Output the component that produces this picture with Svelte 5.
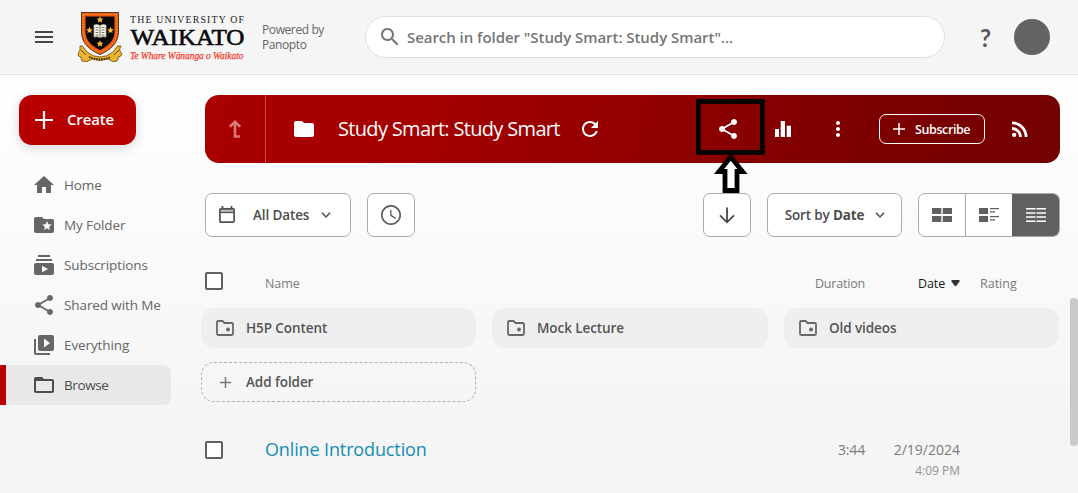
<script>
  const icons = {
    home: 'M10 20v-6h4v6h5v-8h3L12 3 2 12h3v8z',
    star: 'M20 6h-8l-2-2H4c-1.1 0-2 .9-2 2v12c0 1.1.9 2 2 2h16c1.1 0 2-.9 2-2V8c0-1.1-.9-2-2-2zm-2.06 11L15 15.28 12.06 17l.78-3.33-2.59-2.24 3.41-.29L15 8l1.34 3.14 3.41.29-2.59 2.24.78 3.33z',
    subs: 'M20 8H4V6h16v2zm-2-6H6v2h12V2zm4 10v8c0 1.1-.9 2-2 2H4c-1.1 0-2-.9-2-2v-8c0-1.1.9-2 2-2h16c1.1 0 2 .9 2 2zm-6 4l-6-3.27v6.53L16 16z',
    share: 'M18 16.08c-.76 0-1.44.3-1.96.77L8.91 12.7c.05-.23.09-.46.09-.7s-.04-.47-.09-.7l7.05-4.11c.54.5 1.25.81 2.04.81 1.66 0 3-1.34 3-3s-1.34-3-3-3-3 1.34-3 3c0 .24.04.47.09.7L8.04 9.81C7.5 9.31 6.79 9 6 9c-1.66 0-3 1.34-3 3s1.34 3 3 3c.79 0 1.5-.31 2.04-.81l7.12 4.16c-.05.21-.08.43-.08.65 0 1.61 1.31 2.92 2.92 2.92s2.92-1.31 2.92-2.92-1.31-2.92-2.92-2.92z',
    library: 'M4 6H2v14c0 1.1.9 2 2 2h14v-2H4V6zm16-4H8c-1.1 0-2 .9-2 2v12c0 1.1.9 2 2 2h12c1.1 0 2-.9 2-2V4c0-1.1-.9-2-2-2zm-8 12.5v-9l6 4.5-6 4.5z',
    open: 'M20 6h-8l-2-2H4c-1.1 0-1.99.9-1.99 2L2 18c0 1.1.9 2 2 2h16c1.1 0 2-.9 2-2V8c0-1.1-.9-2-2-2zm0 12H4V8h16v10z',
    folder: 'M10 4H4c-1.1 0-1.99.9-1.99 2L2 18c0 1.1.9 2 2 2h16c1.1 0 2-.9 2-2V8c0-1.1-.9-2-2-2h-8l-2-2z',
    refresh: 'M17.65 6.35C16.2 4.9 14.21 4 12 4c-4.42 0-7.99 3.58-7.99 8s3.57 8 7.99 8c3.73 0 6.84-2.55 7.73-6h-2.08c-.82 2.33-3.04 4-5.65 4-3.31 0-6-2.69-6-6s2.69-6 6-6c1.66 0 3.14.69 4.22 1.78L13 11h7V4l-2.35 2.35z',
    chart: 'M4 12h4v8H4zM9.7 4H14v16H9.7zM15.7 8.7H20V20h-4.3z',
    more: 'M12 8c1.1 0 2-.9 2-2s-.9-2-2-2-2 .9-2 2 .9 2 2 2zm0 2c-1.1 0-2 .9-2 2s.9 2 2 2 2-.9 2-2-.9-2-2-2zm0 6c-1.1 0-2 .9-2 2s.9 2 2 2 2-.9 2-2-.9-2-2-2z',
    rss: 'M4 17.82a2.18 2.18 0 1 0 4.36 0a2.18 2.18 0 1 0-4.36 0zM4 4.44v2.83c7.03 0 12.73 5.7 12.73 12.73h2.83c0-8.59-6.97-15.56-15.56-15.56zm0 5.66v2.83c3.9 0 7.07 3.17 7.07 7.07h2.83c0-5.47-4.43-9.9-9.9-9.9z',
    clock: 'M11.99 2C6.47 2 2 6.48 2 12s4.47 10 9.99 10C17.52 22 22 17.52 22 12S17.52 2 11.99 2zM12 20.3c-4.6 0-8.3-3.7-8.3-8.3S7.4 3.7 12 3.7s8.3 3.7 8.3 8.3-3.7 8.3-8.3 8.3zM12.5 7H11.2v5.8l5.1 3.1.7-1.2-4.5-2.7z',
    search: 'M15.5 14h-.79l-.28-.27C15.41 12.59 16 11.11 16 9.5 16 5.91 13.09 3 9.5 3S3 5.91 3 9.5 5.91 16 9.5 16c1.61 0 3.09-.59 4.23-1.57l.27.28v.79l5 4.99L20.49 19l-4.99-5zm-6 0C7.01 14 5 11.99 5 9.5S7.01 5 9.5 5 14 7.01 14 9.5 11.99 14 9.5 14z'
  };

  const nav = [
    { label: 'Home', icon: 'home' },
    { label: 'My Folder', icon: 'star' },
    { label: 'Subscriptions', icon: 'subs' },
    { label: 'Shared with Me', icon: 'share' },
    { label: 'Everything', icon: 'library' },
    { label: 'Browse', icon: 'open', active: true }
  ];
  const folders = ['H5P Content', 'Mock Lecture', 'Old videos'];
</script>

{#snippet icon(name, size = 24)}
  <svg class="icon" width={size} height={size} viewBox="0 0 24 24" fill="currentColor"><path d={icons[name]} /></svg>
{/snippet}

{#snippet chevron()}
  <svg class="icon" width="10" height="8" viewBox="0 0 10 8" fill="none" stroke="currentColor" stroke-width="1.5"><path d="M1 1.7 5 5.9 9 1.7" /></svg>
{/snippet}

<div class="page">
  <header>
    <svg class="menu" width="18" height="12" viewBox="0 0 18 12" fill="#454545"><path d="M0 0h18v2H0zM0 5h18v2H0zM0 10h18v2H0z" /></svg>
    <svg class="logo" width="176" height="60" viewBox="76 7 176 60">
      <path d="M80 46q3 -1 4 2l3 4q13 10 26 0l3-4q1-3 5-2q-3 4 1 8q-1 3-4 3q1 2-1 4q-4 2-9-2q-8 3-16 0q-5 4-10 2q-1-2-1-4q-3 0-3-3q3-4 2-8z" fill="#eeb52c" stroke="#65470c" stroke-width=".8" />
      <path d="M81.5 12.5h37v19c0 11-7 18-18.5 23c-11.500-5-18.500-12-18.500-23z" fill="#f05a16" stroke="#57371b" />
      <path d="M83.3 14.3h33.400v17.200c0 9.600-6 16.300-16.700 21c-10.700-4.700-16.700-11.400-16.700-21z" fill="none" stroke="#f8a51d" stroke-dasharray="1.5 1.5" />
      <path d="M85.5 16.5h29v15c0 8-5 14-14.500 18.500c-9.500-4.500-14.500-10.500-14.500-18.500z" fill="#090909" />
      <g fill="#f8b63c">
        <path id="star" d="M100 16.2l1 2.300 2.400.2-1.800 1.600.6 2.300-2.200-1.200-2.200 1.200.6-2.300-1.800-1.600 2.400-.2z" />
        <use href="#star" x="-10.500" y="10.500" /><use href="#star" x="10.500" y="10.500" /><use href="#star" y="24" />
      </g>
      <path d="M94 25q3-1 6 .5q3-1.500 6-.5v12q-3-1-6 .5q-3-1.500-6-.5z" fill="#f7f5e7" stroke="#bbb5a0" stroke-width=".7" />
      <path d="M100 25.500v12M95.500 27.500h3M95.500 30h3M95.500 32.500h3M95.500 35h3M101.500 27.500h3M101.500 30h3M101.500 32.500h3M101.500 35h3" fill="none" stroke="#555" stroke-width=".8" />
      <path d="M89 57q11 4.500 22 0" fill="none" stroke="#3d2c0b" stroke-width="2" stroke-dasharray="1.5 1" />
      <path d="M81 50l5 5M119 50l-5 5" stroke="#624611" fill="none" />
      <text x="130" y="22.700" class="serif" font-size="9.800" textLength="114" fill="#222">THE UNIVERSITY OF</text>
      <text x="130.500" y="45" class="serif" font-size="24" textLength="114" lengthAdjust="spacingAndGlyphs" fill="#080808" stroke="#080808" stroke-width=".6">WAIKATO</text>
      <text x="130" y="58.500" class="serif" font-size="10.500" font-style="italic" textLength="113.500" lengthAdjust="spacingAndGlyphs" fill="#f03c2c" stroke="#f03c2c" stroke-width=".25">Te Whare Wānanga o Waikato</text>
    </svg>
    <div class="powered">Powered by<br />Panopto</div>
    <div class="search">{@render icon('search')}<span>Search in folder "Study Smart: Study Smart"...</span></div>
    <span class="help">?</span>
    <span class="avatar"></span>
  </header>

  <div class="body">
    <aside>
      <button class="create">
        <svg width="18" height="18" viewBox="0 0 18 18" stroke="#fff" stroke-width="2.2"><path d="M0 9h18M9 0v18" /></svg>
        <span>Create</span>
      </button>
      <nav>
        {#each nav as item}
          <div class="nav-item" class:active={item.active}>{@render icon(item.icon)}<span>{item.label}</span></div>
        {/each}
      </nav>
    </aside>

    <main>
      <section class="banner">
        <div class="up"><svg width="14" height="18" viewBox="0 0 14 18" fill="none" stroke="#d87979" stroke-width="2.6"><path d="M7 1.800v14.700H12M1.800 6.800 7 1.800 12.200 6.800" /></svg></div>
        <span class="b-folder">{@render icon('folder')}</span>
        <h1>Study Smart: Study Smart</h1>
        <span class="b-refresh">{@render icon('refresh')}</span>
        <div class="actions">
          <span class="share">
            {@render icon('share')}
            <svg class="marker" width="70" height="96" viewBox="0 0 70 96" fill="none" stroke="#000">
              <rect x="2.400" y="2.400" width="64" height="51" stroke-width="4.8" />
              <path d="M34.700 58 23 72.500h6v19h12v-19h5.500z" fill="#fff" stroke-width="4.8" />
            </svg>
          </span>
          <span class="stat">{@render icon('chart')}</span>
          <span class="more">{@render icon('more')}</span>
          <button class="subscribe">
            <svg width="12" height="12" viewBox="0 0 12 12" stroke="#fff" stroke-width="1.5"><path d="M0 6h12M6 0v12" /></svg>
            <span>Subscribe</span>
          </button>
          <span class="rss">{@render icon('rss')}</span>
        </div>
      </section>

      <section class="toolbar">
        <button class="box dates">
          <svg width="16" height="18" viewBox="0 0 16 18" fill="none" stroke="#505050"><path d="M1 7V3.500q0-1 1-1h12q1 0 1 1V7z" fill="#bcbcbc" stroke="none" /><rect x=".9" y="2.900" width="14.200" height="13.200" rx="1" stroke-width="1.7" /><path d="M1 6.500h14" stroke-width="1.3" /><path d="M3.500 0v3M12.500 0v3" stroke-width="1.8" /></svg>
          <span>All Dates</span>{@render chevron()}
        </button>
        <button class="box square clock">{@render icon('clock')}</button>
        <button class="box square down"><svg width="16" height="17" viewBox="0 0 16 17" fill="none" stroke="#484848" stroke-width="1.8"><path d="M8 0.500v14.500M1 8.300l7 7 7-7" /></svg></button>
        <button class="box sort"><span>Sort by <b>Date</b></span>{@render chevron()}</button>
        <div class="box views">
          <span><svg width="20" height="14" viewBox="0 0 20 14" fill="#606060"><path d="M0 0h9.300v6H0zM10.700 0H20v6h-9.300zM0 8h9.300v6H0zM10.700 8H20v6h-9.300z" /></svg></span>
          <span><svg width="20" height="14" viewBox="0 0 20 14" fill="#606060"><path d="M0 0h9v6H0zM0 8h9v6H0zM11 0h9v1.300h-9zM11 3.200h5v1.300h-5zM11 8h9v1.300h-9zM11 11.200h5v1.300h-5z" /></svg></span>
          <span class="on"><svg width="20" height="14" viewBox="0 0 20 14" fill="#fff"><path d="M0 0h9.500v1.500H0zM10.500 0H20v1.500h-9.500zM0 4.200h9.500v1.500H0zM10.500 4.200H20v1.500h-9.500zM0 8.300h9.500v1.500H0zM10.500 8.300H20v1.500h-9.500zM0 12.500h9.500V14H0zM10.500 12.500H20V14h-9.500z" /></svg></span>
        </div>
      </section>

      <section class="columns">
        <i class="check"></i>
        <span class="c-name">Name</span>
        <span class="c-duration">Duration</span>
        <span class="c-date">Date <svg width="9" height="6" viewBox="0 0 9 6" fill="#333"><path d="M.5 0h8v1.500L5.200 6H3.800L.5 1.500z" /></svg></span>
        <span class="c-rating">Rating</span>
      </section>

      <section class="folders">
        {#each folders as f}
          <div class="card">
            <svg width="18" height="16" viewBox="0 0 18 16" fill="none" stroke="#686868" stroke-width="1.8"><path d="M1 2.200Q1 1 2.200 1H6.500L8.500 3H15.800Q17 3 17 4.200V13.800Q17 15 15.800 15H2.200Q1 15 1 13.800z" /><circle cx="12" cy="9.500" r="1.900" fill="#686868" stroke="none" /></svg>
            <span>{f}</span>
          </div>
        {/each}
        <div class="card add">
          <svg width="11" height="11" viewBox="0 0 11 11" stroke="#777" stroke-width="1.5"><path d="M0 5.500h11M5.500 0v11" /></svg>
          <span>Add folder</span>
        </div>
      </section>

      <section class="row">
        <i class="check"></i>
        <span class="title">Online Introduction</span>
        <span class="duration">3:44</span>
        <div class="when"><span>2/19/2024</span><small>4:09 PM</small></div>
      </section>
    </main>
    <div class="scroll"><i></i></div>
  </div>
</div>

<style>
  :global(body) { overflow: hidden; }
  .page, .page * { box-sizing: border-box; }
  .page { width: 1078px; height: 493px; overflow: hidden; display: flex; flex-direction: column; font-family: "Open Sans", "Noto Sans", sans-serif; color: #505050; }
  svg { display: block; flex: none; }
  span { white-space: nowrap; }
  button { font: inherit; color: inherit; margin: 0; padding: 0; border: 0; display: flex; align-items: center; }
  header { height: 75px; flex: none; background: #f5f5f5; border-bottom: 1px solid #e3e3e3; display: flex; align-items: center; }
  .menu { margin-left: 35px; }
  .logo { margin-left: 23px; overflow: visible; }
  .serif { font-family: "Liberation Serif", serif; }
  .powered { width: 113px; padding-left: 10px; font-size: 12px; line-height: 15px; letter-spacing: -.4px; color: #666; }
  .search { width: 580px; height: 42px; border: 1px solid #e0e0e0; border-radius: 21px; background: #fff; display: flex; align-items: center; padding-left: 12px; color: #757575; font-size: 15px; font-weight: 600; }
  .search span { margin-left: 5px; margin-top: -1px; letter-spacing: -.05px; }
  .help { margin-left: 35px; width: 13px; font-size: 24px; font-weight: 700; color: #5a5a5a; font-family: Lato, sans-serif; }
  .avatar { margin-left: 21px; width: 36px; height: 36px; border-radius: 50%; background: #636363; }
  .body { flex: 1; display: flex; background: linear-gradient(#fff, #f6f6f6 72%, #f4f4f4); }
  aside { width: 205px; padding-top: 20px; flex: none; }
  .create { width: 117px; height: 50px; margin-left: 19px; padding-left: 16px; background: #b90000; color: #fff; border-radius: 13px; font-size: 15px; font-weight: 600; box-shadow: 0 3px 12px rgba(0,0,0,.15); }
  .create span { margin-left: 14px; margin-top: -2px; letter-spacing: -.15px; }
  nav { margin-top: 20px; }
  .nav-item { width: 171px; height: 40px; padding-left: 32px; display: flex; align-items: center; font-size: 13.5px; letter-spacing: -.1px; color: #666; }
  .nav-item span { margin-left: 8px; }
  .nav-item.active { background: #e8e8e8; border-left: 6px solid #b90000; padding-left: 26px; border-radius: 0 8px 8px 0; color: #4c4c4c; }
  .nav-item.active span { letter-spacing: -.4px; }
  main { width: 855px; padding-top: 20px; flex: none; }
  .banner { height: 68px; border-radius: 14px; background: linear-gradient(100deg, #a90000, #a50000 25%, #910000 52%, #7d0000 76%, #740000); display: flex; align-items: center; color: #fff; }
  .up { width: 61px; height: 68px; display: flex; align-items: center; justify-content: center; border-right: 1px solid #c05050; }
  .b-folder { margin-left: 26px; }
  h1 { width: 223px; margin: 0 0 0 22px; font-size: 20px; line-height: 28px; font-weight: 400; letter-spacing: -.67px; white-space: nowrap; }
  .b-refresh { margin-left: 17px; }
  .actions { flex: 1; display: flex; align-items: center; padding-left: 114px; }
  .share { position: relative; }
  .marker { position: absolute; left: -20px; top: -18px; z-index: 3; }
  .stat { margin-left: 31px; }
  .more { margin-left: 31px; }
  .subscribe { width: 106px; height: 30px; margin-left: 29px; padding-left: 13px; border: 1px solid #fff; border-radius: 7px; background: none; color: #fff; font-size: 12.5px; font-weight: 600; }
  .subscribe span { margin-left: 10px; letter-spacing: -.4px; }
  .rss { margin-left: 23px; }
  .toolbar { margin-top: 30px; height: 44px; display: flex; }
  .box { height: 44px; border: 1px solid #aaa; border-radius: 7px; background: #fff; font-size: 13.5px; font-weight: 600; color: #4c4c4c; }
  .dates { width: 146px; padding-left: 13px; }
  .dates span { margin: 0 12px 0 18px; letter-spacing: -.12px; }
  .square { width: 48px; justify-content: center; }
  .clock { margin-left: 16px; color: #585858; }
  .down { margin-left: 288px; }
  .sort { width: 135px; margin-left: 16px; padding-left: 16px; }
  .sort span { width: 81px; margin-right: 10px; letter-spacing: -.15px; }
  .sort b { font-weight: 700; }
  .views { width: 142px; margin-left: 16px; display: flex; overflow: hidden; }
  .views span { width: 47px; display: flex; align-items: center; justify-content: center; border-right: 1px solid #aaa; }
  .views .on { flex: 1; background: #606060; border: 0; margin: -1px; }
  .columns { height: 20px; margin-top: 36px; display: flex; align-items: center; font-size: 12.5px; letter-spacing: -.15px; color: #7a7a7a; }
  .check { width: 18px; height: 18px; border: 2px solid #606060; border-radius: 2px; background: #fff; flex: none; }
  .columns .check { margin-top: -4px; }
  .c-name { margin-left: 42px; width: 395px; letter-spacing: -.1px; }
  .c-duration { width: 205px; text-align: right; letter-spacing: -.2px; }
  .c-date { width: 95px; display: flex; align-items: center; justify-content: flex-end; gap: 6px; color: #161616; }
  .c-rating { margin-left: 20px; letter-spacing: 0; }
  .folders { margin: 15px 0 0 -4px; width: 858px; display: grid; grid-template-columns: 275px 276px 275px; gap: 14px 16px; }
  .card { height: 40px; border-radius: 13px; background: #efefef; display: flex; align-items: center; padding-left: 15px; font-size: 13.5px; font-weight: 600; letter-spacing: -.08px; color: #555; }
  .card span { margin-left: 12px; }
  .add { width: 275px; background: none; border: 1px dashed #b0b0b0; padding-left: 18px; }
  .add span { margin-left: 15px; }
  .row { margin-top: 37px; display: flex; align-items: flex-start; color: #7a7a7a; }
  .row .check { margin-top: 2px; }
  .title { margin: -1px 0 0 42px; width: 395px; font-size: 18px; line-height: 22px; letter-spacing: -.13px; color: #168db4; }
  .duration { width: 205px; text-align: right; font-size: 14px; line-height: 22px; letter-spacing: -.15px; }
  .when { width: 95px; display: flex; flex-direction: column; align-items: flex-end; font-size: 14px; line-height: 22px; }
  small { font-size: 12px; line-height: 20px; color: #929292; }
  .scroll { width: 8px; margin-left: 10px; padding-top: 223px; }
  .scroll i { display: block; height: 148px; border-radius: 4px; background: #c9c9c9; }
</style>
